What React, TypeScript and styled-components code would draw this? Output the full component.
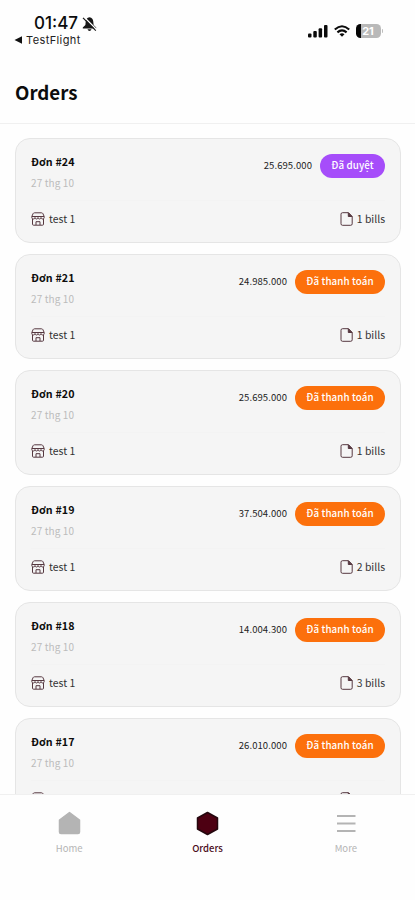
import React from "react";
import styled, { createGlobalStyle } from "styled-components";

const Global = createGlobalStyle`
  * { box-sizing: border-box; }
  body { margin: 0; background: #fefefe; }
`;

const Screen = styled.div`
  width: 415px;
  height: 900px;
  overflow: hidden;
  display: flex;
  flex-direction: column;
  background: #fefefe;
  color: #0c0c0c;
  font-family: "Noto Sans CJK SC", "Noto Sans", sans-serif;
`;

const StatusBar = styled.div`
  height: 62px;
  flex: none;
  display: flex;
  justify-content: space-between;
  padding: 13px 32px 0 14px;
  font-family: Inter, sans-serif;
`;

const Clock = styled.div`
  display: flex;
  align-items: center;
  gap: 4px;
  height: 21px;
  padding-left: 20px;
  font-size: 17px;
  font-weight: 500;
  line-height: 21px;
`;

const BackLink = styled.div`
  display: flex;
  align-items: center;
  gap: 3px;
  height: 12px;
  font-size: 11px;
  line-height: 12px;
  letter-spacing: 0.4px;
  color: #222;
`;

const Indicators = styled.div`
  display: flex;
  align-items: center;
  gap: 6px;
  height: 36px;
`;

const Battery = styled.div`
  display: flex;
  align-items: center;
  gap: 1px;
  &::after {
    content: "";
    width: 1.5px;
    height: 4px;
    border-radius: 0 2px 2px 0;
    background: #bdbdbd;
  }
`;

const Charge = styled.div`
  width: 25px;
  height: 14px;
  border-radius: 4.5px;
  background: linear-gradient(90deg, #050505 5px, #b9b9b9 5px);
  color: #fff;
  font-size: 11px;
  font-weight: 700;
  line-height: 14px;
  text-align: center;
`;

const Header = styled.header`
  flex: none;
  height: 62px;
  padding-left: 15px;
  border-bottom: 1px solid #f0f0f0;
`;

const Title = styled.h1`
  margin: 0;
  font-size: 18.7px;
  font-weight: 700;
  line-height: 59px;
`;

const List = styled.main`
  flex: 1;
  min-height: 0;
  overflow: hidden;
  display: flex;
  flex-direction: column;
  gap: 11px;
  padding: 14px 14px 0 15px;
`;

const Card = styled.article`
  flex: none;
  height: 105px;
  border: 1px solid #e5e5e5;
  border-radius: 15px;
  background: #f5f5f5;
  padding: 0 15px;
`;

const CardTop = styled.div`
  display: flex;
  justify-content: space-between;
  height: 62px;
  padding-top: 14px;
  border-bottom: 1px solid #f3f3f3;
`;

const OrderName = styled.div`
  font-size: 10.7px;
  font-weight: 700;
  line-height: 18px;
  letter-spacing: 0.12px;
`;

const OrderDate = styled.div`
  margin-top: 3px;
  font-size: 10px;
  line-height: 18px;
  letter-spacing: 0.1px;
  color: #bcbcbc;
`;

const Summary = styled.div`
  display: flex;
  align-items: center;
  gap: 8px;
  height: 24px;
  margin-top: 1px;
`;

const Amount = styled.span`
  height: 24px;
  font-size: 9.5px;
  line-height: 22px;
  letter-spacing: 0.08px;
  color: #222;
`;

const Badge = styled.span<{ $approved?: boolean }>`
  width: ${(p) => (p.$approved ? 65 : 90)}px;
  height: 24px;
  border-radius: 12px;
  background: ${(p) => (p.$approved ? "#a64dfa" : "#fc700c")};
  color: #fff;
  font-size: 9.8px;
  font-weight: 500;
  line-height: 22px;
  letter-spacing: 0.1px;
  text-align: center;
  white-space: nowrap;
`;

const CardBottom = styled.div`
  display: flex;
  justify-content: space-between;
  align-items: center;
  height: 36px;
`;

const Detail = styled.div`
  display: flex;
  align-items: center;
  gap: 4px;
  font-size: 10.4px;
  line-height: 16px;
  color: #333;
`;

const TabBar = styled.nav`
  flex: none;
  height: 106px;
  border-top: 1px solid #f0f0f0;
  background: #fefefe;
  display: grid;
  grid-template-columns: repeat(3, 1fr);
`;

const Tab = styled.div<{ $active?: boolean }>`
  display: flex;
  flex-direction: column;
  align-items: center;
  padding-top: 15px;
  color: ${(p) => (p.$active ? "#4b0c1b" : "#b5b5b5")};
  font-size: 9.5px;
  font-weight: ${(p) => (p.$active ? 500 : 400)};
  line-height: 14px;
  svg { margin-bottom: 5px; }
`;

const BellOff = () => (
  <svg width="15" height="16" viewBox="0 0 15 16">
    <path d="M7.500 1.200c-2.500.3-3.600 2.200-3.800 4.500L3.400 9 .8 11.500v1h13.400v-1L11.600 9l-.3-3.300C11.100 3.400 10 1.500 7.500 1.200z" fill="#161616" />
    <path d="M5.500 13.300h4q-.5 1.700-2 1.700t-2-1.700z" fill="#161616" />
    <path d="M2.300 1.300l12 12" stroke="#fefefe" strokeWidth="1.300" />
    <path d="M1 1.800l12.800 12.800" stroke="#161616" strokeWidth="1.200" />
  </svg>
);

const BackArrow = () => (
  <svg width="9" height="8" viewBox="0 0 9 8"><path d="M.5 4L8 .2v7.600z" fill="#111" /></svg>
);

const Signal = () => (
  <svg width="20" height="13" viewBox="0 0 20 13" fill="#0b0b0b">
    <rect x="0" y="8.500" width="3.500" height="4" rx="1" />
    <rect x="5.300" y="6" width="3.500" height="6.500" rx="1" />
    <rect x="10.600" y="3.200" width="3.500" height="9.300" rx="1" />
    <rect x="16" y="0" width="3.500" height="12.500" rx="1" />
  </svg>
);

const Wifi = () => (
  <svg width="16" height="12" viewBox="0 0 16 12" fill="none" stroke="#0b0b0b" strokeWidth="2.100">
    <path d="M.8 4.500Q8-2 15.200 4.500" />
    <path d="M3.400 7.400Q8 3.200 12.600 7.400" />
    <path d="M5.500 9.200Q8 7.200 10.500 9.200L8 11.700z" fill="#0b0b0b" stroke="none" />
  </svg>
);

const Store = () => (
  <svg width="14" height="14" viewBox="0 0 14 14" fill="none" stroke="#563840" strokeWidth="1" strokeLinejoin="round">
    <path d="M3.500.8h7q1 0 1.400.8l1.300 2.900v1q-.2 1.500-1.500 1.500T10 5.500Q9.700 7 8.500 7T7 5.500Q6.700 7 5.500 7T4 5.500Q3.700 7 2.300 7T.8 5.500v-1l1.300-2.900Q2.500.8 3.500.8z" />
    <path d="M1.500 7v5.200q0 1 1 1h9q1 0 1-1V7M5 13V9.700h4V13M1 4.500h12" />
  </svg>
);

const Bill = () => (
  <svg width="13" height="14" viewBox="0 0 13 14" fill="none" stroke="#563840" strokeWidth="1" strokeLinejoin="round">
    <path d="M2.500.7h6l3.700 3.800v7.300q0 1.500-1.500 1.500H2.500Q1 13.300 1 11.800V2.200Q1 .7 2.500.7z" />
    <path d="M8.300.8v3.700H12z" fill="#563840" />
  </svg>
);

const Home = () => (
  <svg width="26" height="26" viewBox="0 0 26 26">
    <path d="M13.500 2.500L23.500 10v12q0 1.500-1.500 1.500H5q-1.500 0-1.500-1.500V10z" fill="#b4b4b4" stroke="#b4b4b4" strokeWidth="1.500" strokeLinejoin="round" />
  </svg>
);

const Hexagon = () => (
  <svg width="26" height="26" viewBox="0 0 26 26">
    <path d="M13.500 2.500L23.500 8v11L13.500 24.500 3.500 19V8z" fill="#4d0012" stroke="#24070e" strokeWidth="1.500" strokeLinejoin="round" />
  </svg>
);

const Menu = () => (
  <svg width="26" height="26" viewBox="0 0 26 26" stroke="#b4b4b4" strokeWidth="2">
    <path d="M4 6h18.500M4 13.500h18.500M4 21h18.500" />
  </svg>
);

const orders = [
  { id: 24, amount: "25.695.000", bills: 1, approved: true },
  { id: 21, amount: "24.985.000", bills: 1 },
  { id: 20, amount: "25.695.000", bills: 1 },
  { id: 19, amount: "37.504.000", bills: 2 },
  { id: 18, amount: "14.004.300", bills: 3 },
  { id: 17, amount: "26.010.000", bills: 1 },
];

export default function App() {
  return (
    <>
      <Global />
      <Screen>
        <StatusBar>
          <div>
            <Clock>01:47 <BellOff /></Clock>
            <BackLink><BackArrow />TestFlight</BackLink>
          </div>
          <Indicators>
            <Signal />
            <Wifi />
            <Battery><Charge>21</Charge></Battery>
          </Indicators>
        </StatusBar>
        <Header><Title>Orders</Title></Header>
        <List>
          {orders.map((o) => (
            <Card key={o.id}>
              <CardTop>
                <div>
                  <OrderName>Đơn #{o.id}</OrderName>
                  <OrderDate>27 thg 10</OrderDate>
                </div>
                <Summary>
                  <Amount>{o.amount}</Amount>
                  <Badge $approved={o.approved}>{o.approved ? "Đã duyệt" : "Đã thanh toán"}</Badge>
                </Summary>
              </CardTop>
              <CardBottom>
                <Detail><Store />test 1</Detail>
                <Detail><Bill />{o.bills} bills</Detail>
              </CardBottom>
            </Card>
          ))}
        </List>
        <TabBar>
          <Tab><Home />Home</Tab>
          <Tab $active><Hexagon />Orders</Tab>
          <Tab><Menu />More</Tab>
        </TabBar>
      </Screen>
    </>
  );
}
